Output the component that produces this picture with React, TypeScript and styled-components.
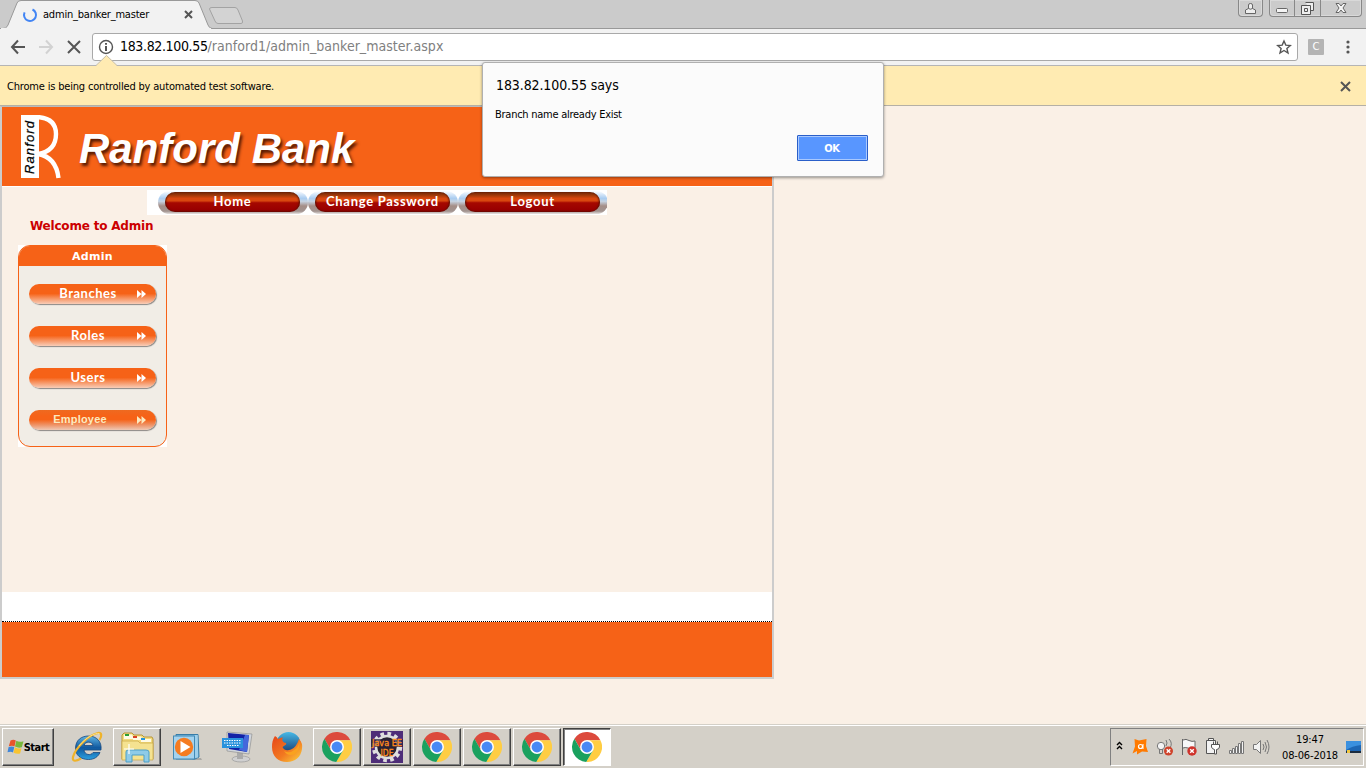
import React from "react";
import styled, { createGlobalStyle, css } from "styled-components";

const UI = '"DejaVu Sans Condensed", "DejaVu Sans", "Noto Sans", sans-serif';
const WIDE = '"DejaVu Sans", "Noto Sans", sans-serif';

const Global = createGlobalStyle`
  * { box-sizing: border-box; }
  html, body { margin: 0; padding: 0; overflow: hidden; }
  body { font-family: ${UI}; font-stretch: condensed; font-size: 11px; color: #000; }
  svg { display: block; flex: none; }
`;

const Screen = styled.div`
  width: 1366px;
  height: 768px;
  display: flex;
  flex-direction: column;
  position: relative;
  overflow: hidden;
  background: #faf0e6;
`;

const Label = styled.span<{ $size?: number; $gap?: number; $color?: string; $bold?: boolean }>`
  font-size: ${(p) => p.$size ?? 11}px;
  letter-spacing: ${(p) => p.$gap ?? 0}px;
  color: ${(p) => p.$color ?? "#000"};
  font-weight: ${(p) => (p.$bold ? 700 : 400)};
  white-space: pre;
`;

/* Browser chrome */
const TabStrip = styled.header`
  height: 29px;
  flex: none;
  display: flex;
  background: #cbcbcb;
  border-bottom: 1px solid #999;
`;
const Tab = styled.div`
  width: 212px;
  height: 29px;
  position: relative;
  display: flex;
  align-items: center;
  padding: 0 16px 0 22px;
`;
const TabShape = styled.svg`
  position: absolute;
  left: 0;
  top: 0;
`;
const TabTitle = styled.div`
  position: relative;
  width: 141px;
  margin-left: 5px;
  line-height: 29px;
  height: 29px;
`;
const TabIcon = styled.div`
  position: relative;
`;
const Spacer = styled.div`
  flex: 1;
`;
const WindowButtons = styled.div`
  display: flex;
  gap: 6px;
  margin-right: 4px;
`;
const WindowGroup = styled.div`
  height: 17px;
  display: flex;
  border: 1px solid #888;
  border-top: 0;
  border-radius: 0 0 4px 4px;
  box-shadow: inset 0 0 0 1px #d9d9d9;
`;
const WindowButton = styled.div<{ $w: number }>`
  width: ${(p) => p.$w}px;
  display: flex;
  align-items: center;
  justify-content: center;
  & + & { border-left: 1px solid #888; }
`;

const Toolbar = styled.div`
  height: 37px;
  flex: none;
  display: flex;
  align-items: center;
  padding: 0 10px;
  background: #f2f2f2;
  border-bottom: 1px solid #b5b5b5;
`;
const NavIcons = styled.div`
  display: flex;
  gap: 12px;
  width: 82px;
`;
const AddressBar = styled.div`
  width: 1206px;
  height: 28px;
  display: flex;
  align-items: center;
  padding: 0 5px;
  background: #fff;
  border: 1px solid #a9a9a9;
  border-radius: 3px;
`;
const Url = styled.div`
  flex: 1;
  margin-left: 6px;
  line-height: 27px;
`;
const ToolbarEnd = styled.div`
  display: flex;
  align-items: center;
  gap: 22px;
  margin-left: 10px;
`;
const Extension = styled.div`
  width: 16px;
  height: 16px;
  border-radius: 1px;
  background: #b4b4b4;
  color: #fff;
  font: 10px/16px ${WIDE};
  text-align: center;
`;

const InfoBar = styled.div`
  height: 40px;
  flex: none;
  position: relative;
  display: flex;
  align-items: center;
  justify-content: space-between;
  padding: 1px 15px 0 7px;
  background: #ffebb2;
  border-bottom: 1px solid #b5b0a5;
`;
const Notch = styled.svg`
  position: absolute;
  left: 96px;
  top: -11px;
`;

/* Bank page */
const Page = styled.main`
  height: 618px;
  flex: none;
`;
const Site = styled.div`
  width: 774px;
  height: 573px;
  display: flex;
  flex-direction: column;
  border: 2px solid #ccc;
  border-top: 1px solid #bbb;
`;
const Banner = styled.div`
  height: 79px;
  flex: none;
  display: flex;
  padding: 8px 0 0 18px;
  background: #f66217;
`;
const BankName = styled.h1`
  margin: 10px 0 0 17px;
  font: italic bold 42px/48px "Liberation Sans", Arial, sans-serif;
  letter-spacing: 0;
  color: #fff;
  text-shadow: 2px 3px 3px rgba(60, 15, 0, 0.85);
  white-space: nowrap;
`;
const Content = styled.div`
  height: 406px;
  flex: none;
  border-top: 1px solid #fff;
`;
const Menu = styled.nav`
  width: 460px;
  height: 25px;
  margin: 3px 0 0 145px;
  padding: 1px 0 0 11px;
  display: flex;
  background: #fff;
  overflow: hidden;
`;
const MenuItem = styled.div`
  width: 150px;
  height: 23px;
  flex: none;
  padding: 1px 8px 3px 7px;
  border-radius: 12px;
  background: linear-gradient(180deg, #fff 0, #d5e6f8 15%, #a9ccf0 32%, #c6d3e2 45%, #a58e87 65%, #a29490 88%, #e8e4e2 100%);
`;
const MenuPill = styled.div`
  height: 20px;
  border-radius: 10px;
  color: #fff;
  font: 700 13px/18px "Century Gothic", Lato, sans-serif;
  letter-spacing: 0.7px;
  text-align: center;
  background: linear-gradient(180deg, #6b2508 0, #a33a0a 17%, #d9470f 32%, #d9480f 44%, #a50800 54%, #990000 88%, #6c0900 100%);
  box-shadow: inset 2px 0 2px -1px #541000, inset -2px 0 2px -1px #541000;
`;
const Welcome = styled.div`
  margin: 4px 0 0 28px;
  height: 15px;
  font: 700 12px/15px ${WIDE};
  letter-spacing: -0.2px;
  color: #c00;
  white-space: nowrap;
`;
const PanelBack = styled.aside`
  width: 149px;
  height: 202px;
  margin: 11px 0 0 16px;
  background: #fff;
`;
const Panel = styled.div`
  height: 202px;
  border: 1px solid #f66217;
  border-radius: 12px;
  background: #f1ede6;
  overflow: hidden;
`;
const PanelTitle = styled.div`
  height: 20px;
  background: #f66217;
  color: #fff;
  text-align: center;
  font: 700 11px/21px ${WIDE};
  letter-spacing: 0.3px;
`;
const PanelList = styled.div`
  display: flex;
  flex-direction: column;
  gap: 22px;
  padding: 18px 0 0 10px;
`;
const PanelButton = styled.div<{ $plain?: boolean }>`
  width: 127px;
  height: 20px;
  display: flex;
  align-items: center;
  border-radius: 10px;
  background: linear-gradient(180deg, #f66217 0, #f66217 48%, #f79462 72%, #f8cdb8 100%);
  box-shadow: 1px 1px 1px #8c8885;
  color: ${(p) => (p.$plain ? "#fbeac0" : "#fff")};
  font: 700 13px/19px Lato, sans-serif;
  letter-spacing: 0.5px;
  ${(p) =>
    p.$plain &&
    css`
      font: 700 11px/18px "Liberation Sans", Arial, sans-serif;
      letter-spacing: 0.2px;
      background: linear-gradient(180deg, #ee6a20 0, #f66217 30%, #f66217 48%, #ee9468 75%, #efc8b4 100%);
    `}
`;
const PanelText = styled.span<{ $plain?: boolean }>`
  width: ${(p) => (p.$plain ? 102 : 118)}px;
  margin-right: ${(p) => (p.$plain ? 6 : -10)}px;
  padding-bottom: ${(p) => (p.$plain ? 3 : 2)}px;
  text-align: center;
`;
const FooterGap = styled.div`
  height: 30px;
  flex: none;
  background: #fff;
  border-bottom: 1px dotted #000;
`;
const Footer = styled.footer`
  flex: 1;
  background: #f66217;
`;

/* Alert */
const Dialog = styled.div`
  position: absolute;
  left: 482px;
  top: 62px;
  width: 402px;
  height: 115px;
  padding: 14px 15px 15px 12px;
  display: flex;
  flex-direction: column;
  background: #fbfbfb;
  border: 1px solid #b0b0b0;
  border-radius: 3px;
  box-shadow: 0 1px 3px rgba(0, 0, 0, 0.4);
`;
const DialogTitle = styled.div`
  height: 16px;
  line-height: 16px;
  padding-left: 1px;
`;
const DialogText = styled.div`
  margin-top: 15px;
  height: 14px;
  line-height: 14px;
`;
const DialogButton = styled.button`
  align-self: flex-end;
  margin-top: 13px;
  width: 71px;
  height: 26px;
  flex: none;
  padding: 0 1px 2px 0;
  border: 1px solid #2a5fc9;
  border-radius: 1px;
  background: #5896ff;
  box-shadow: inset 0 0 0 1px #a9c9ff;
  font-family: ${UI};
`;

/* Taskbar */
const Taskbar = styled.div`
  height: 44px;
  flex: none;
  display: flex;
  align-items: flex-start;
  padding: 2px 2px 0;
  background: #d4d0c8;
  box-shadow: inset 0 1px 0 #d4d0c8, inset 0 2px 0 #fff;
`;
const TaskButton = styled.div<{ $state?: "flat" | "pressed"; $w?: number }>`
  width: ${(p) => p.$w ?? 48}px;
  height: 38px;
  margin: 2px 2px 0 0;
  flex: none;
  display: flex;
  align-items: center;
  justify-content: center;
  border: 1px solid;
  border-color: #fff #404040 #404040 #fff;
  box-shadow: inset -1px -1px 0 #808080;
  ${(p) =>
    p.$state === "flat" &&
    css`
      border-color: transparent;
      box-shadow: none;
    `}
  ${(p) =>
    p.$state === "pressed" &&
    css`
      background: #fff;
      border-color: #404040 #fff #fff #404040;
      box-shadow: inset 1px 1px 0 #808080;
    `}
`;
const StartGap = styled.div`
  width: 7px;
  flex: none;
`;
const Tray = styled.div`
  width: 254px;
  height: 38px;
  margin-top: 2px;
  display: flex;
  align-items: center;
  padding: 0 0 0 4px;
  border: 1px solid;
  border-color: #808080 #fff #fff #808080;
`;
const TrayIcons = styled.div`
  display: flex;
  align-items: center;
  width: 160px;
`;
const Clock = styled.div`
  width: 70px;
  height: 36px;
  display: flex;
  flex-direction: column;
  align-items: center;
  line-height: 16px;
  padding-top: 3px;
`;
const TrayEnd = styled.div`
  margin-left: 1px;
`;

const Cross = ({ size = 9, color = "#555", width = 2 }: { size?: number; color?: string; width?: number }) => (
  <svg width={size} height={size} viewBox={`0 0 ${size} ${size}`}>
    <path d={`M1 1L${size - 1} ${size - 1}M${size - 1} 1L1 ${size - 1}`} stroke={color} strokeWidth={width} />
  </svg>
);

const Logo = () => (
  <svg width="42" height="64" viewBox="0 0 42 64">
    <rect x="1" y="0" width="18" height="63" fill="#fff" />
    <path d="M17 2Q36 3 36 19Q36 36 18 39Q36 42 38.5 63" fill="none" stroke="#fff" strokeWidth="4.4" />
    <text x="14" y="59" transform="rotate(-90 14 59)" fontFamily="Liberation Sans, Arial" fontSize="13" fontStyle="italic" fontWeight="400" stroke="#000" strokeWidth=".25" textLength="53">
      Ranford
    </text>
  </svg>
);

const ChromeIcon = () => (
  <svg width="30" height="30" viewBox="2 2 44 44">
    <path d="M5.54 12.03A22 22 0 0 1 43.6 14H24L24 24L15.34 29Z" fill="#dc4a3d" />
    <path d="M43.6 14A22 22 0 0 1 22.86 45.97L32.66 29L24 24V14Z" fill="#ffcd42" />
    <path d="M22.86 45.97A22 22 0 0 1 5.54 12.03L15.34 29L24 24L32.66 29Z" fill="#1aa15f" />
    <circle cx="24" cy="24" r="10.2" fill="#fff" />
    <circle cx="24" cy="24" r="8" fill="#4788f4" />
  </svg>
);

const WindowsFlag = () => (
  <svg width="17" height="16" viewBox="0 0 16 16">
    <path d="M3 1.500Q6 0 8.300 1.500L7 7.500Q5 6 1.300 7.300Z" fill="#e8552c" />
    <path d="M8.800 1.800Q12 3.500 16 2.200L14.300 8.300Q11 9.500 7.500 7.600Z" fill="#78b83c" />
    <path d="M1.100 8Q4.500 6.800 6.800 8.100L5.500 13.500Q3.500 12 0 13.300Z" fill="#4186d8" />
    <path d="M7.400 8.300Q11 10.200 14 9.200L12.600 14.500Q9.500 15.500 6 13.700Z" fill="#f8c432" />
  </svg>
);

const IeIcon = () => (
  <svg width="32" height="32" viewBox="0 0 32 32">
    <defs>
      <linearGradient id="ie" x2="0" y2="1">
        <stop offset="0" stopColor="#5eb4e4" />
        <stop offset=".5" stopColor="#10589e" />
        <stop offset="1" stopColor="#2aa0e0" />
      </linearGradient>
    </defs>
    <path d="M30 19H13C13.500 24 20 25 22 21.500H29C27 26 23 28.500 17.500 28.500C9.500 28.500 4.500 24 4.500 17.500C4.500 9 10.500 5 17.500 5C25.500 5 31 10.500 30 19ZM13 14.500H22C21.500 10 14 10 13 14.500Z" fill="url(#ie)" stroke="#17487f" strokeWidth=".8" />
    <path d="M28.500 9C31 5 31 1.500 27 2C17 4 4 18 2 26C1 31 5 30.500 10 27.500" fill="none" stroke="#efb32a" strokeWidth="2.200" />
    <path d="M28.500 2.500C24 1.500 14 7 8 15" fill="none" stroke="#fbe28a" strokeWidth="1" />
  </svg>
);

const FolderIcon = () => (
  <svg width="34" height="32" viewBox="0 0 34 32">
    <path d="M2 28V4L4 2H12L14 4H22L24 6H32L33 8V28Z" fill="#f3dc7e" stroke="#b99638" />
    <path d="M4 8V3.500H12L14 8ZM13 9V5.500H21L23 9ZM21 11V8H31V11Z" fill="#fffbe4" />
    <path d="M5 3H9V5H5Z" fill="#2c9f36" />
    <path d="M13 5H17V7H13Z" fill="#d94226" />
    <path d="M21 7H25V9H21Z" fill="#2594dc" />
    <path d="M2 10H18L20 12H33V29H2Z" fill="#f5e290" stroke="#c9a744" strokeWidth=".7" />
    <path d="M6 31V21Q6 19 8 19H26Q29 19 29 21V31H24V24H12V31Z" fill="#8ecbe8" stroke="#4c9fc7" />
    <path d="M9 13V23M4 18H14" stroke="#fff" strokeWidth="1.200" />
  </svg>
);

const MediaIcon = () => (
  <svg width="31" height="28" viewBox="0 0 31 28">
    <path d="M22 25H29L30 27H20Z" fill="#aaa9a5" />
    <path d="M4 1.500H26L27 24L23 26H4Z" fill="#7dbbe0" stroke="#377ca8" />
    <path d="M23 2V25M25 2V25" stroke="#d0edfb" strokeWidth=".8" />
    <rect x="1.500" y="3" width="21" height="23" fill="#a4d2ee" stroke="#4289b5" />
    <circle cx="12" cy="14" r="9.200" fill="#f57b20" />
    <path d="M8.500 8V20L18.500 14Z" fill="#fff" />
  </svg>
);

const MonitorIcon = () => (
  <svg width="32" height="32" viewBox="0 0 32 32">
    <ellipse cx="20" cy="28" rx="9" ry="3" fill="#d0d0d1" stroke="#999" strokeWidth=".7" />
    <path d="M16 21L22 22V28H16Z" fill="#aaa" />
    <path d="M6 1L31 3L28 23L6 20Z" fill="#d0d5dc" stroke="#888" strokeWidth=".6" />
    <path d="M7 2L28 4L26 21L8 18Z" fill="#1222a6" />
    <path d="M24 4H28L26 21L18 19Z" fill="#4468dc" />
    <rect x="1" y="7" width="21" height="10" fill="#2a92dc" />
    <path d="M3 9.500H20M3 12H20M6 14.500H18" stroke="#fff" strokeDasharray="1.500 1" />
  </svg>
);

const FirefoxIcon = () => (
  <svg width="32" height="32" viewBox="0 0 32 32">
    <defs>
      <linearGradient id="fx" x2="1" y2="1">
        <stop offset="0" stopColor="#e64519" />
        <stop offset=".55" stopColor="#f27921" />
        <stop offset="1" stopColor="#fcd43c" />
      </linearGradient>
      <linearGradient id="globe" x2="0" y2="1">
        <stop offset="0" stopColor="#47b9e7" />
        <stop offset="1" stopColor="#122a62" />
      </linearGradient>
    </defs>
    <circle cx="17.500" cy="13" r="12" fill="url(#globe)" />
    <path d="M4 5Q6 6 7 8Q10 6 12 6.500Q10 9 13 11.500Q16 11.500 15 13.500L11.500 16Q14 21 20 18.500Q25 17 28 8Q32 12 31 18C30 26 24 31 16 31C7 31 1 25 1 16Q1 9 4 5Z" fill="url(#fx)" />
    <path d="M28 8Q29 15 24 18.500Q19 23 13 20Q17 26 24 23Q30 18 28 8Z" fill="#f9a21f" />
  </svg>
);

const JavaIcon = () => (
  <svg width="32" height="32" viewBox="0 0 32 32">
    <rect width="32" height="32" fill="#4e2d78" />
    <circle cx="16" cy="16" r="13.200" fill="none" stroke="#dedede" strokeWidth="4" strokeDasharray="3.600 3.310" />
    <circle cx="16" cy="16" r="11" fill="#282331" stroke="#dedede" strokeWidth="2.500" />
    <rect y="8" width="32" height="8" fill="#28213b" opacity=".7" />
    <g fill="#ff8b1e" fontFamily="DejaVu Sans Condensed, sans-serif" fontSize="8.500" strokeWidth=".3" stroke="#ff8b1e">
      <text x="1" y="14.500" textLength="30" lengthAdjust="spacingAndGlyphs">Java EE</text>
      <text x="9.500" y="24.500" textLength="13" lengthAdjust="spacingAndGlyphs">IDE</text>
    </g>
  </svg>
);

const TrayDrawing = () => (
  <svg width="155" height="26" viewBox="0 0 155 26">
    <path d="M1.500 11L4 8.500L6.500 11M1.500 15L4 12.500L6.500 15" transform="translate(.5 0)" fill="none" stroke="#000" strokeWidth="1.400" />
    <path d="M19.500 5L24 6.500L31.500 5L31 12L33 18L27 17.500L22 20.500V17L17.500 19.500L20 12.500Z" fill="#ff7a00" />
    <circle cx="25.500" cy="12.500" r="2" fill="none" stroke="#fff" strokeWidth="1.200" />
    <path d="M28 10V15" stroke="#fff" />
    <circle cx="46" cy="12" r="3.700" fill="#f4f4f4" stroke="#777" />
    <path d="M44.500 15V19.500H47.500V15M51 6Q53 9 51 12M54 5Q58 9 55 14" fill="none" stroke="#777" />
    <circle cx="53.500" cy="17" r="4.500" fill="#cf432b" />
    <path d="M51.700 15.200L55.300 18.800M55.300 15.200L51.700 18.800" stroke="#fff" strokeWidth="1.400" />
    <path d="M67.500 5V21M68 6Q71 4.500 74 6.500Q77 8 80 7V15Q77 16 73 14Q70 13 68 14" fill="#f8f8f8" stroke="#666" />
    <circle cx="77" cy="17" r="4.700" fill="#cf332b" />
    <path d="M75.200 15.200L78.800 18.800M78.800 15.200L75.200 18.800" stroke="#fff" strokeWidth="1.400" />
    <path d="M91.500 6.500V19.500H100.500V6.500ZM93.500 4.500H98.500V6.500H93.500Z" fill="#f2f2f2" stroke="#555" />
    <path d="M96.500 10.500H104.500V13Q104 15.500 101.500 15.500V20H99.500V15.500Q97 15 96.500 13ZM98.500 10V7.500M102.500 10V7.500" fill="#fff" stroke="#555" />
    <g fill="#f2f2f2" stroke="#777">
      <path d="M114.500 16.500H116.500V19.500H114.500ZM117.500 14.500H119.500V19.500H117.500ZM120.500 12.500H122.500V19.500H120.500ZM123.500 9.500H125.500V19.500H123.500ZM126.500 7.500H128.500V19.500H126.500Z" />
      <path d="M138.500 10.500H141.500L145.500 6.500V19.500L141.500 15.500H138.500Z" />
      <path d="M148 10Q150 13 148 16M150 8Q153 13 150 18M152 6Q156 13 152 20" fill="none" />
    </g>
  </svg>
);

const Arrows = () => (
  <svg width="10" height="8" viewBox="0 0 10 8">
    <path d="M0 0L4.500 4L0 8ZM4.500 0L9 4L4.500 8Z" fill="currentColor" />
  </svg>
);

export default function App() {
  return (
    <Screen>
      <Global />
      <TabStrip>
        <Tab>
          <TabShape width="246" height="29" viewBox="0 0 246 29">
            <path d="M0 29L5.500 28Q7 27 8 25L17 3Q18 .5 21 .5H195Q198 .5 199 3L208 25Q209 28 212 28.500V29Z" fill="#f2f2f2" stroke="#999" />
            <path d="M1 28.600H211" stroke="#f2f2f2" strokeWidth="1.200" />
            <path d="M212 7.500H235Q237 7.500 238 10L242.500 21Q243 23.500 241 23.500H218Q216 23.500 215 21L209.500 9Q209.500 7.500 212 7.500Z" fill="#d3d3d3" stroke="#a3a3a3" />
          </TabShape>
          <TabIcon>
            <svg width="16" height="16" viewBox="0 0 16 16">
              <path d="M10.500 2.500A6 6 0 1 1 2.600 5.400" fill="none" stroke="#4285f4" strokeWidth="2" />
            </svg>
          </TabIcon>
          <TabTitle><Label $gap={-0.2}>admin_banker_master</Label></TabTitle>
          <TabIcon><Cross /></TabIcon>
        </Tab>
        <Spacer />
        <WindowButtons>
          <WindowGroup>
            <WindowButton $w={23}>
              <svg width="11" height="11" viewBox="0 0 11 11"><path d="M3.500 5.500V2Q3.500 .5 5.500 .5Q7.500 .5 7.500 2V5.500L10.500 7V10.500H.5V7ZM3.500 5.500Q5.500 7 7.500 5.500" fill="#eee" stroke="#666" /></svg>
            </WindowButton>
          </WindowGroup>
          <WindowGroup>
            <WindowButton $w={24}>
              <svg width="13" height="12" viewBox="0 0 13 12"><rect x=".5" y="6.500" width="11" height="4" rx="1" fill="#f4f4f4" stroke="#666" /></svg>
            </WindowButton>
            <WindowButton $w={26}>
              <svg width="13" height="13" viewBox="0 0 13 13"><path d="M4.500.5H12.500V8.500H9.500M.5 3.500H9.500V12.500H.5ZM3.500 6.500H6.500V9.500H3.500Z" fill="#eee" stroke="#555" /></svg>
            </WindowButton>
            <WindowButton $w={41}>
              <svg width="12" height="10" viewBox="0 0 12 10"><path d="M1 .5H4L6 3L8 .5H11L8 5L11 9.500H8L6 7L4 9.500H1L4 5Z" fill="#f4f4f4" stroke="#666" /></svg>
            </WindowButton>
          </WindowGroup>
        </WindowButtons>
      </TabStrip>
      <Toolbar>
        <NavIcons>
          <svg width="16" height="16" viewBox="0 0 16 16"><path d="M15 8H2.500M8 1.500L2 8L8 14.500" fill="none" stroke="#555" strokeWidth="2" /></svg>
          <svg width="16" height="16" viewBox="0 0 16 16"><path d="M1 8H13.500M8 1.500L14 8L8 14.500" fill="none" stroke="#d2d2d2" strokeWidth="2" /></svg>
          <svg width="16" height="16" viewBox="0 0 16 16"><path d="M2 2L14 14M14 2L2 14" stroke="#555" strokeWidth="2" /></svg>
        </NavIcons>
        <AddressBar>
          <svg width="16" height="16" viewBox="0 0 16 16">
            <circle cx="8" cy="8" r="6.500" fill="none" stroke="#555" strokeWidth="1.400" />
            <path d="M8 4V5.800M8 7V12" stroke="#555" strokeWidth="2" />
          </svg>
          <Url>
            <Label $size={14} $gap={-0.35}>183.82.100.55</Label>
            <Label $size={14} $gap={0.03} $color="#808080">/ranford1/admin_banker_master.aspx</Label>
          </Url>
          <svg width="16" height="16" viewBox="0 0 16 16"><path d="M8 2L9.800 6.100L14.300 6.500L10.900 9.500L12 14L8 11.500L4 14L5.100 9.500L1.700 6.500L6.200 6.100Z" fill="none" stroke="#555" strokeWidth="1.400" /></svg>
        </AddressBar>
        <ToolbarEnd>
          <Extension>C</Extension>
          <svg width="4" height="14" viewBox="0 0 4 14"><g fill="#555"><circle cx="2" cy="2" r="1.600" /><circle cx="2" cy="7" r="1.600" /><circle cx="2" cy="12" r="1.600" /></g></svg>
        </ToolbarEnd>
      </Toolbar>
      <InfoBar>
        <Notch width="22" height="12" viewBox="0 0 22 12"><path d="M0 10.500L10.500 0L21 10.500V12H0Z" fill="#ffebb2" /><path d="M0 10.500L10.500 .5L21 10.500" fill="none" stroke="#c6bfae" /></Notch>
        <Label $gap={-0.18}>Chrome is being controlled by automated test software.</Label>
        <Cross size={11} />
      </InfoBar>
      <Page>
        <Site>
          <Banner>
            <Logo />
            <BankName>Ranford Bank</BankName>
          </Banner>
          <Content>
            <Menu>
              {["Home", "Change Password", "Logout"].map((t) => (
                <MenuItem key={t}><MenuPill>{t}</MenuPill></MenuItem>
              ))}
            </Menu>
            <Welcome>Welcome to Admin</Welcome>
            <PanelBack>
              <Panel>
                <PanelTitle>Admin</PanelTitle>
                <PanelList>
                  {["Branches", "Roles", "Users", "Employee"].map((t) => (
                    <PanelButton key={t} $plain={t === "Employee"}>
                      <PanelText $plain={t === "Employee"}>{t}</PanelText>
                      <Arrows />
                    </PanelButton>
                  ))}
                </PanelList>
              </Panel>
            </PanelBack>
          </Content>
          <FooterGap />
          <Footer />
        </Site>
      </Page>
      <Taskbar>
        <TaskButton $w={52}>
          <WindowsFlag />
          <Label $bold $gap={-0.5}>Start</Label>
        </TaskButton>
        <StartGap />
        <TaskButton $state="flat"><IeIcon /></TaskButton>
        <TaskButton><FolderIcon /></TaskButton>
        <TaskButton $state="flat"><MediaIcon /></TaskButton>
        <TaskButton $state="flat"><MonitorIcon /></TaskButton>
        <TaskButton $state="flat"><FirefoxIcon /></TaskButton>
        <TaskButton><ChromeIcon /></TaskButton>
        <TaskButton><JavaIcon /></TaskButton>
        <TaskButton><ChromeIcon /></TaskButton>
        <TaskButton><ChromeIcon /></TaskButton>
        <TaskButton><ChromeIcon /></TaskButton>
        <TaskButton $state="pressed"><ChromeIcon /></TaskButton>
        <Spacer />
        <Tray>
          <TrayIcons><TrayDrawing /></TrayIcons>
          <Clock>
            <Label $gap={-0.1}>19:47</Label>
            <Label $gap={-0.15}>08-06-2018</Label>
          </Clock>
          <TrayEnd>
            <svg width="16" height="13" viewBox="0 0 16 13"><rect width="15" height="11" fill="#1d66b4" /><path d="M0 0H15V4Q6 5 0 9Z" fill="#3a90df" /><path d="M0 11H15" stroke="#1b2c3f" strokeWidth="2" /><path d="M1 9H4V12H1Z" fill="#f0c640" /></svg>
          </TrayEnd>
        </Tray>
      </Taskbar>
      <Dialog>
        <DialogTitle><Label $size={14} $gap={-0.1}>183.82.100.55 says</Label></DialogTitle>
        <DialogText><Label $gap={-0.26}>Branch name already Exist</Label></DialogText>
        <DialogButton><Label $bold $color="#fff" $gap={-0.3}>OK</Label></DialogButton>
      </Dialog>
    </Screen>
  );
}
